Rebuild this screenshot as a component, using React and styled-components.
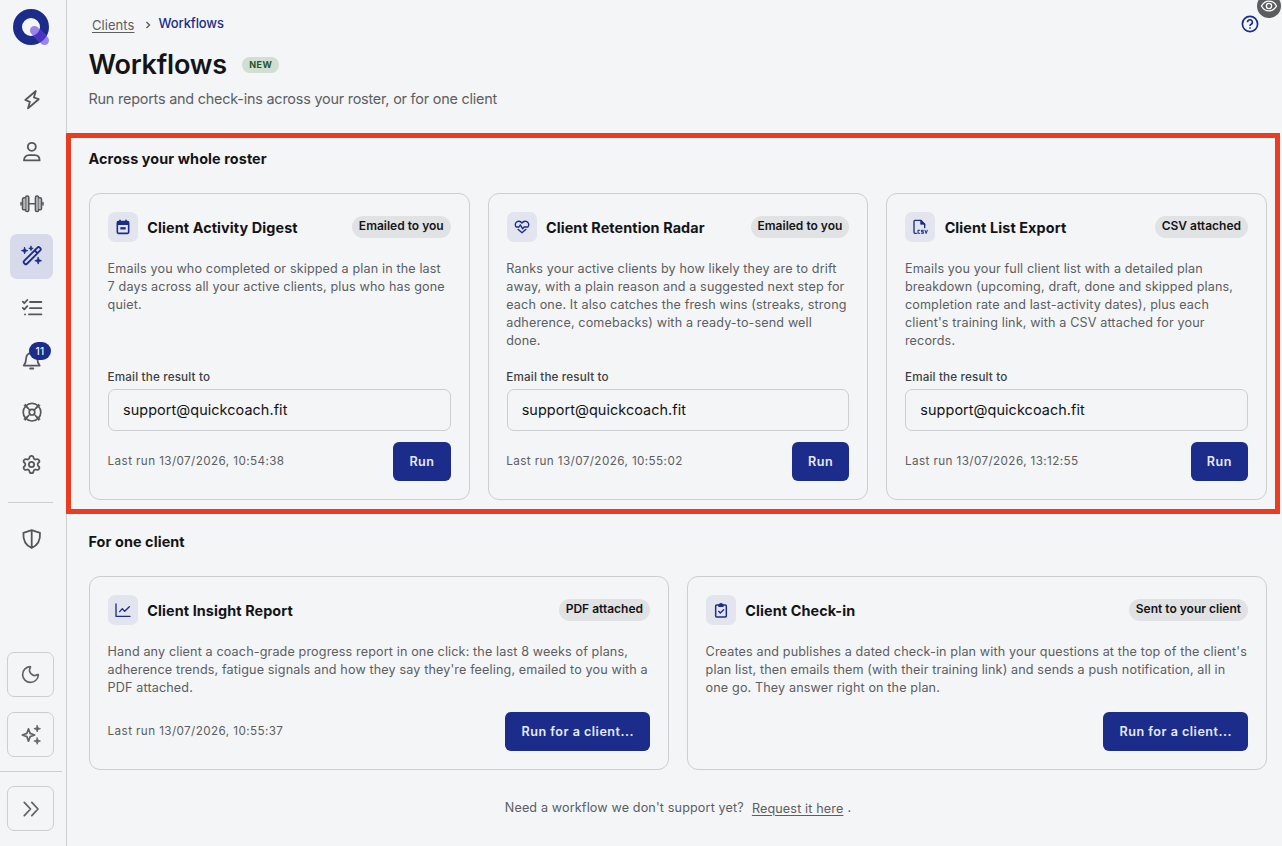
import styled, { createGlobalStyle } from 'styled-components';

import { Moon, Settings } from 'lucide-react';

const colours = {
  page: '#f3f5f7',
  line: '#cdced2',
  navy: '#1b2c8a',
  text: '#131416',
  muted: '#5c5e62',
  icon: '#55575b',
  highlight: '#eb3c1f',
};

const GlobalStyle = createGlobalStyle`
  * {
    box-sizing: border-box;
  }
  body {
    margin: 0;
    background: ${colours.page};
    color: ${colours.text};
    font-family: Inter, 'Liberation Sans', sans-serif;
  }
  button, input {
    font-family: inherit;
  }
`;

const Page = styled.div`
  display: flex;
  position: relative;
  height: 846px;
  overflow: hidden;
`;

const Sidebar = styled.aside`
  width: 67px;
  flex: none;
  display: flex;
  flex-direction: column;
  border-right: 1px solid ${colours.line};
  padding-top: 9px;
  color: ${colours.icon};
`;

const LogoLink = styled.a`
  display: block;
  height: 37px;
  margin: 0 0 32px 13px;

  svg {
    display: block;
  }
`;

const Nav = styled.nav`
  display: flex;
  flex-direction: column;
  gap: 7px;
  margin-left: 10px;
`;

const NavItem = styled.a`
  position: relative;
  display: flex;
  align-items: center;
  justify-content: center;
  width: 43px;
  height: 45px;
  padding-bottom: 1px;
  border-radius: 7px;
  color: ${(props) => (props.$active ? colours.navy : 'inherit')};
  background: ${(props) => (props.$active ? '#d6daea' : 'none')};
`;

const CountBadge = styled.span`
  position: absolute;
  top: 4px;
  left: 19px;
  width: 22px;
  height: 18px;
  border-radius: 9px;
  background: ${colours.navy};
  color: #eef0fb;
  font-size: 10px;
  font-weight: 500;
  line-height: 18px;
  text-align: center;
  letter-spacing: 0.4px;
`;

const NavDivider = styled.div`
  width: 45px;
  height: 1px;
  margin: 15px 0 14px 8px;
  background: ${colours.line};
`;

const SidebarFooter = styled.div`
  display: flex;
  flex-direction: column;
  gap: 15px;
  margin-top: auto;
  padding: 0 0 15px 7px;
`;

const SquareButton = styled.button`
  display: flex;
  align-items: center;
  justify-content: center;
  width: 47px;
  height: 45px;
  padding: 0;
  border: 1px solid ${colours.line};
  border-radius: 7px;
  background: none;
  color: #626468;
`;

const FooterDivider = styled.div`
  width: 62px;
  height: 1px;
  margin: -1px 0 -1px -7px;
  background: ${colours.line};
`;

const Main = styled.main`
  flex: 1;
  min-width: 0;
`;

const Header = styled.header`
  display: flex;
  justify-content: space-between;
  height: 133px;
  padding: 15px 23px 0 21.5px;
`;

const Breadcrumbs = styled.div`
  display: flex;
  align-items: center;
  height: 17px;
  padding-left: 3.5px;
  font-size: 13px;
  line-height: 17px;
`;

const CrumbLink = styled.a`
  padding-top: 3px;
  color: ${colours.muted};
  letter-spacing: 0.06px;
  text-decoration: underline;
  text-underline-offset: 2px;
`;

const CrumbArrow = styled.svg`
  margin: 3px 7px 0 11px;
`;

const CurrentCrumb = styled.span`
  color: ${colours.navy};
  font-weight: 500;
  letter-spacing: -0.1px;
`;

const TitleRow = styled.div`
  display: flex;
  align-items: center;
  margin-top: 16px;
`;

const Title = styled.h1`
  margin: 0;
  font-size: 27px;
  font-weight: 600;
  line-height: 34px;
  letter-spacing: -0.22px;
`;

const NewBadge = styled.span`
  height: 16px;
  margin-left: 15.5px;
  padding: 0 7px;
  border-radius: 8px;
  background: #d0dfd2;
  color: #24552b;
  font-size: 9px;
  font-weight: 700;
  line-height: 16px;
  letter-spacing: 0.4px;
`;

const Subtitle = styled.p`
  margin: 7px 0 0;
  color: ${colours.muted};
  font-size: 14.4px;
  line-height: 20px;
  letter-spacing: -0.21px;
`;

const HelpIcon = styled.svg`
  color: ${colours.navy};
`;

const EyeBadge = styled.div`
  position: absolute;
  top: -6px;
  right: 1px;
  width: 24px;
  height: 24px;
  border-radius: 50%;
  display: flex;
  align-items: center;
  justify-content: center;
  background: #5b5c5e;
  color: #fff;
`;

const Section = styled.section`
  padding: 18px 15px 0 22px;
`;

const HighlightedSection = styled(Section)`
  margin: 0 2px 0 -1px;
  padding: 11px 8px 9px 18px;
  border: 5px solid ${colours.highlight};
`;

const SectionTitle = styled.h2`
  margin: 0 0 25px -0.5px;
  font-size: 14.4px;
  font-weight: 700;
  line-height: 19px;
  letter-spacing: 0.09px;
`;

const CardGrid = styled.div`
  display: grid;
  grid-template-columns: repeat(${(props) => props.$columns}, 1fr);
  gap: 18px;
`;

const Card = styled.article`
  display: flex;
  flex-direction: column;
  min-width: 0;
  padding: 18px;
  border: 1px solid ${colours.line};
  border-radius: 11px;
`;

const CardHeader = styled.div`
  display: flex;
  align-items: center;
  height: 30px;
  margin-bottom: 18px;
`;

const CardIcon = styled.span`
  display: flex;
  align-items: center;
  justify-content: center;
  width: 30px;
  height: 30px;
  border-radius: 7px;
  background: #e3e5ee;
  color: ${colours.navy};
`;

const CardTitle = styled.h3`
  flex: 1;
  margin: 1px 0 0 9.3px;
  font-size: 14.4px;
  font-weight: 700;
  letter-spacing: 0.1px;
  white-space: nowrap;
`;

const Tag = styled.span`
  height: 22px;
  padding: 0 7px;
  border-radius: 11px;
  background: #e1e2e4;
  font-size: 12px;
  font-weight: 600;
  line-height: 20px;
  white-space: nowrap;
`;

const Description = styled.p`
  margin: 0 0 15px -0.4px;
  color: ${colours.muted};
  font-size: 12.6px;
  line-height: 18px;
  letter-spacing: 0.135px;
`;

const EmailLabel = styled.label`
  display: block;
  margin: auto 0 0 -0.4px;
  padding-top: 3px;
  color: #3c3e42;
  font-size: 11.7px;
  font-weight: 500;
  line-height: 18px;
  letter-spacing: 0.15px;
`;

const EmailInput = styled.input`
  width: 100%;
  height: 42px;
  margin: 3px 0 11px;
  padding: 0 14px 1px;
  border: 1px solid ${colours.line};
  border-radius: 7px;
  background: none;
  color: ${colours.text};
  font-size: 14.4px;
  letter-spacing: 0.08px;
`;

const CardFooter = styled.div`
  display: flex;
  align-items: center;
  justify-content: space-between;
  height: 39px;
`;

const LastRun = styled.span`
  margin-left: -0.4px;
  padding-bottom: 1px;
  color: ${colours.muted};
  font-size: 11.7px;
  letter-spacing: 0.4px;
`;

const RunButton = styled.button`
  min-width: 57.4px;
  height: 39px;
  padding: 0 16px;
  border: none;
  border-radius: 6px;
  background: ${colours.navy};
  color: #e6eafc;
  font-size: 12.6px;
  font-weight: 600;
  letter-spacing: 0.49px;
  white-space: nowrap;
`;

const RequestLine = styled.p`
  display: flex;
  justify-content: center;
  margin: 28px 0 0;
  color: ${colours.muted};
  font-size: 12.6px;
  line-height: 20px;
  letter-spacing: 0.14px;
`;

const RequestLink = styled.a`
  margin: 1px 4px 0 8px;
  text-decoration: underline;
  text-underline-offset: 2px;
`;

function Icon({ size = 24, stroke = 1.8, children }) {
  return (
    <svg
      width={size}
      height={size}
      viewBox="0 0 24 24"
      fill="none"
      stroke="currentColor"
      strokeWidth={stroke}
      strokeLinecap="round"
      strokeLinejoin="round">
      {children}
    </svg>
  );
}

// four-pointed star centred on x, y
function Spark({ x, y, r, filled = true }) {
  const k = r * 0.26;
  const d = `M${x} ${y - r}L${x + k} ${y - k}L${x + r} ${y}L${x + k} ${y + k}L${x} ${y + r}L${x - k} ${y + k}L${x - r} ${y}L${x - k} ${y - k}Z`;
  return (
    <path
      d={d}
      fill={filled ? 'currentColor' : 'none'}
      strokeWidth={filled ? 0.8 : 1.7}
    />
  );
}

function Logo() {
  return (
    <svg width="37" height="37" viewBox="0 0 37 37" fill="none">
      <clipPath id="ring">
        <path
          clipRule="evenodd"
          d="M0 18a18 18 0 1 0 36 0a18 18 0 1 0-36 0zM9 18a9 9 0 1 0 18 0a9 9 0 1 0-18 0z"
        />
      </clipPath>
      <circle cx="18" cy="18" r="13.5" stroke="#1b2c8a" strokeWidth="9" />
      <path
        d="M21.5 21.5L31.5 31.5"
        stroke="#9a83ea"
        strokeWidth="9"
        strokeLinecap="round"
      />
      <path
        d="M21.5 21.5L31.5 31.5"
        stroke="#4a33bd"
        strokeWidth="9"
        strokeLinecap="round"
        clipPath="url(#ring)"
      />
    </svg>
  );
}

const navItems = [
  {
    name: 'activity',
    icon: (
      <Icon>
        <path d="M15.8 3L5.3 12l4.6 1.8L8 20.4l10.700-9.200-4.800-1.700z" />
      </Icon>
    ),
  },
  {
    name: 'clients',
    icon: (
      <Icon>
        <circle cx="11.8" cy="6.8" r="4" />
        <path d="M4 20.4c0-3.4 2-5.2 5-5.2h5.600c3 0 5 1.800 5 5.200z" />
      </Icon>
    ),
  },
  {
    name: 'training',
    icon: (
      <Icon stroke={1.5}>
        <g fill="#b9bbbf">
          <rect x="5.6" y="4" width="3.2" height="15.6" rx="1.4" />
          <rect x="15.4" y="4" width="3.2" height="15.6" rx="1.4" />
          <path d="M5.4 5.8H3.800a1.300 1.300 0 0 0-1.300 1.300v9.400a1.300 1.300 0 0 0 1.300 1.300h1.600M18.600 5.800h1.600a1.300 1.300 0 0 1 1.300 1.300v9.400a1.300 1.300 0 0 1-1.300 1.300h-1.600" />
        </g>
        <path d="M9 11.800h6.200M1 10.600v2.400M23 10.600v2.400" />
      </Icon>
    ),
  },
  {
    name: 'workflows',
    active: true,
    icon: (
      <Icon stroke={1.8}>
        <rect
          x="1.2"
          y="9.700"
          width="22"
          height="4"
          rx="1.6"
          transform="rotate(-45 12.2 11.7)"
        />
        <path d="M14.800 6.500l2.600 2.600" />
        <Spark x={4.6} y={6.6} r={3.2} />
        <Spark x={11} y={4.4} r={2.2} />
        <Spark x={18.2} y={16.7} r={3.4} />
      </Icon>
    ),
  },
  {
    name: 'plans',
    icon: (
      <Icon>
        <path d="M10 6h11.400M10 12.200h11.400M9 18.400h12.400M2.800 5.700l1.500 1.500 3-3.200M2.800 11.900l1.500 1.500 3-3.200M5 18.400h.1" />
      </Icon>
    ),
  },
  {
    name: 'notifications',
    count: 11,
    icon: (
      <Icon>
        <path d="M3.700 17.600c1.600-1.700 2.300-3.600 2.300-6.400 0-3.700 2.200-6.200 5.700-6.200s5.700 2.500 5.700 6.200c0 2.800.7 4.700 2.300 6.400z" />
        <path d="M10.200 20.600h3" strokeWidth="2" />
      </Icon>
    ),
  },
  {
    name: 'support',
    icon: (
      <Icon stroke={1.7}>
        <circle cx="12" cy="12.2" r="8.8" />
        <circle cx="12" cy="12.2" r="2.8" />
        <path
          d="M5.200 4.400l4.800 5.800M4.200 5.400l5.800 4.800M18.800 4.400L14 10.200M19.800 5.400L14 10.200M5.200 20L10 14.200M4.200 19L10 14.200M18.800 20L14 14.200M19.800 19L14 14.200"
          strokeWidth="1.200"
        />
      </Icon>
    ),
  },
  { name: 'settings', icon: <Settings size={21} strokeWidth={2} /> },
];

const rosterWorkflows = [
  {
    title: 'Client Activity Digest',
    tag: 'Emailed to you',
    lastRun: '13/07/2026, 10:54:38',
    description:
      'Emails you who completed or skipped a plan in the last 7 days across all your active clients, plus who has gone quiet.',
    icon: (
      <Icon size={16} stroke={2.4}>
        <rect x="3.5" y="4" width="17" height="17.5" rx="1.5" />
        <path d="M4 6.5h16" strokeWidth="5" strokeLinecap="butt" />
        <path d="M7.5 2v3M16.5 2v3" />
        <path d="M8 14h8" strokeWidth="3.5" strokeLinecap="butt" />
      </Icon>
    ),
  },
  {
    title: 'Client Retention Radar',
    tag: 'Emailed to you',
    lastRun: '13/07/2026, 10:55:02',
    description:
      'Ranks your active clients by how likely they are to drift away, with a plain reason and a suggested next step for each one. It also catches the fresh wins (streaks, strong adherence, comebacks) with a ready-to-send well done.',
    icon: (
      <Icon size={16} stroke={2}>
        <path d="M12 6C9.5 2.5 5 2.6 3 5.4c-1.5 2.2-1.2 4.8.3 6.6h4.2l2-3.2 3.5 6 2-2.8h5.7c1.5-1.8 1.8-4.4.3-6.6-2-2.800-6.500-2.900-9 .6z" />
        <path d="M6 15.500l6 5.200 6-5.200" />
      </Icon>
    ),
  },
  {
    title: 'Client List Export',
    tag: 'CSV attached',
    lastRun: '13/07/2026, 13:12:55',
    description:
      "Emails you your full client list with a detailed plan breakdown (upcoming, draft, done and skipped plans, completion rate and last-activity dates), plus each client's training link, with a CSV attached for your records.",
    icon: (
      <Icon size={16} stroke={2}>
        <path d="M6.500 21.500H4.500a1.500 1.500 0 0 1-1.500-1.500V3.500A1.500 1.500 0 0 1 4.500 2H13l6 6v5" />
        <path d="M13 2v6h6z" fill="currentColor" strokeWidth="1" />
        <path
          d="M11.500 17H9v4.500h2.500M17 17h-2.600v2.200H17v2.300h-2.600M19.500 17l1.700 4.500 1.700-4.500"
          strokeWidth="1.600"
        />
      </Icon>
    ),
  },
];

const clientWorkflows = [
  {
    title: 'Client Insight Report',
    tag: 'PDF attached',
    lastRun: '13/07/2026, 10:55:37',
    description:
      "Hand any client a coach-grade progress report in one click: the last 8 weeks of plans, adherence trends, fatigue signals and how they say they're feeling, emailed to you with a PDF attached.",
    icon: (
      <Icon size={16} stroke={2}>
        <path d="M1.500 3v18.500h21" />
        <path d="M7 14.500l4-4.500 3.500 4L21.500 7" />
      </Icon>
    ),
  },
  {
    title: 'Client Check-in',
    tag: 'Sent to your client',
    description:
      "Creates and publishes a dated check-in plan with your questions at the top of the client's plan list, then emails them (with their training link) and sends a push notification, all in one go. They answer right on the plan.",
    icon: (
      <Icon size={16} stroke={2.2}>
        <rect x="4" y="4.5" width="16" height="18" rx="1.5" />
        <path d="M9 4.500h1a2 2 0 0 1 4 0h1V6.500H9z" fill="currentColor" />
        <path d="M8.500 14l2.500 2.500 5-5" strokeWidth="2" />
      </Icon>
    ),
  },
];

function WorkflowCard({ workflow, hasEmail }) {
  return (
    <Card>
      <CardHeader>
        <CardIcon>{workflow.icon}</CardIcon>
        <CardTitle>{workflow.title}</CardTitle>
        <Tag>{workflow.tag}</Tag>
      </CardHeader>
      <Description>{workflow.description}</Description>
      {hasEmail && (
        <>
          <EmailLabel>Email the result to</EmailLabel>
          <EmailInput type="text" defaultValue="support@quickcoach.fit" />
        </>
      )}
      <CardFooter>
        <LastRun>{workflow.lastRun && `Last run ${workflow.lastRun}`}</LastRun>
        <RunButton>{hasEmail ? 'Run' : 'Run for a client...'}</RunButton>
      </CardFooter>
    </Card>
  );
}

function App() {
  return (
    <Page>
      <GlobalStyle />
      <Sidebar>
        <LogoLink>
          <Logo />
        </LogoLink>
        <Nav>
          {navItems.map((item) => (
            <NavItem key={item.name} $active={item.active}>
              {item.icon}
              {item.count && <CountBadge>{item.count}</CountBadge>}
            </NavItem>
          ))}
        </Nav>
        <NavDivider />
        <Nav>
          <NavItem>
            <Icon>
              <path d="M11.700 3.200l8.300 2.600c.5 8-2.300 12.700-8.300 15.200C5.700 18.500 2.900 13.800 3.400 5.800zM11.700 3.200V21" />
            </Icon>
          </NavItem>
        </Nav>
        <SidebarFooter>
          <SquareButton>
            <Moon size={21} strokeWidth={1.9} />
          </SquareButton>
          <SquareButton>
            <Icon>
              <Spark x={9.5} y={12} r={6.2} filled={false} />
              <Spark x={18.2} y={5.7} r={3.3} />
              <Spark x={18.2} y={18} r={3.3} />
            </Icon>
          </SquareButton>
          <FooterDivider />
          <SquareButton>
            <Icon>
              <path d="M5.300 5.400l6.200 6.600-6.200 6.600M12.800 5.400l6.200 6.600-6.200 6.600" />
            </Icon>
          </SquareButton>
        </SidebarFooter>
      </Sidebar>

      <Main>
        <Header>
          <div>
            <Breadcrumbs>
              <CrumbLink>Clients</CrumbLink>
              <CrumbArrow width="6" height="8" viewBox="0 0 6 8" fill="none">
                <path d="M1.5 1l3 3-3 3" stroke="#55575b" strokeWidth="1.3" />
              </CrumbArrow>
              <CurrentCrumb>Workflows</CurrentCrumb>
            </Breadcrumbs>
            <TitleRow>
              <Title>Workflows</Title>
              <NewBadge>NEW</NewBadge>
            </TitleRow>
            <Subtitle>
              Run reports and check-ins across your roster, or for one client
            </Subtitle>
          </div>
          <HelpIcon width="18" height="18" viewBox="0 0 18 18" fill="none">
            <circle cx="9" cy="9" r="7.6" stroke="currentColor" strokeWidth="1.7" />
            <path
              d="M6.600 7.200a2.400 2.400 0 1 1 3.600 2c-.8.500-1.200.9-1.200 1.700M9 12.200v1.600"
              stroke="currentColor"
              strokeWidth="1.600"
            />
          </HelpIcon>
        </Header>

        <HighlightedSection>
          <SectionTitle>Across your whole roster</SectionTitle>
          <CardGrid $columns={3}>
            {rosterWorkflows.map((workflow) => (
              <WorkflowCard key={workflow.title} workflow={workflow} hasEmail />
            ))}
          </CardGrid>
        </HighlightedSection>

        <Section>
          <SectionTitle>For one client</SectionTitle>
          <CardGrid $columns={2}>
            {clientWorkflows.map((workflow) => (
              <WorkflowCard key={workflow.title} workflow={workflow} />
            ))}
          </CardGrid>
          <RequestLine>
            Need a workflow we don't support yet?
            <RequestLink>Request it here</RequestLink>.
          </RequestLine>
        </Section>
      </Main>

      <EyeBadge>
        <Icon size={18} stroke={1.8}>
          <path d="M2 12c2.500-4.500 6-6.500 10-6.500s7.500 2 10 6.500c-2.500 4.500-6 6.500-10 6.500S4.500 16.500 2 12z" />
          <circle cx="12" cy="12" r="3.500" />
        </Icon>
      </EyeBadge>
    </Page>
  );
}

export default App;
